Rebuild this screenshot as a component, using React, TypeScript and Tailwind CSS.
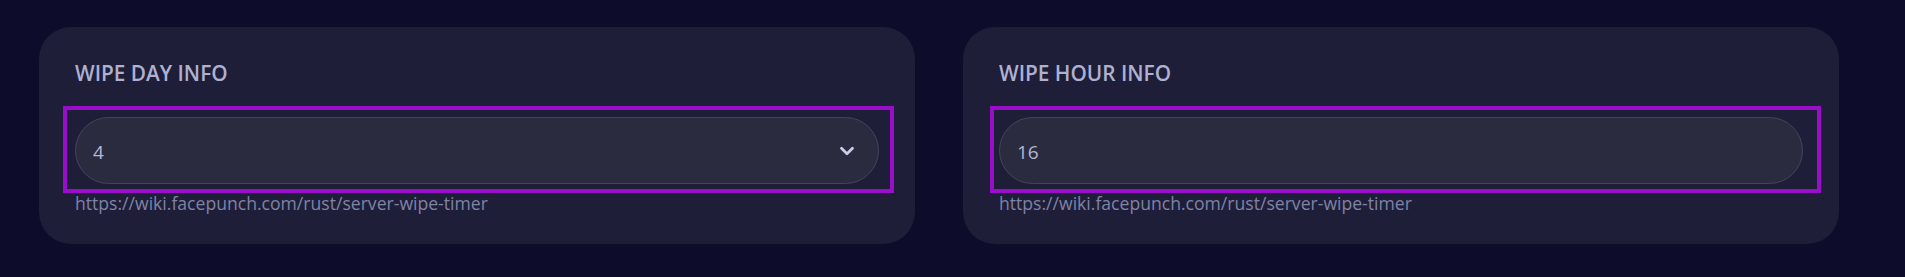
import { ChevronDown } from "lucide-react";

const WIKI = "https://wiki.facepunch.com/rust/server-wipe-timer";

type FieldCardProps = {
  title: string;
  value: string;
  select?: boolean;
  boxClass: string;
};

function FieldCard({ title, value, select, boxClass }: FieldCardProps) {
  return (
    <div className="w-[876px] rounded-[32px] bg-[#1e1e39] px-9 pt-[32px] pb-[31px]">
      <h3 className="text-[20.8px] leading-[28px] font-semibold text-[#aeb1d1]">
        {title}
      </h3>
      {/* highlighted field wrapper */}
      <div className={`mt-[19px] border-4 border-[#9a0dca] pt-[7px] pb-[5px] ${boxClass}`}>
        <div className="flex h-[67px] items-center justify-between rounded-full border border-[#43445c] bg-[#2b2b40] pl-[17px] pr-5">
          <span className="pt-1 text-[19px] text-[#b4b6d0]">{value}</span>
          {select && <ChevronDown size={22} strokeWidth={3} className="text-[#c9cde8]" />}
        </div>
      </div>
      <p className="text-[17.6px] leading-[20px] text-[#7f83a6]">{WIKI}</p>
    </div>
  );
}

export default function App() {
  return (
    <div
      className="h-[277px] w-full bg-[#0d0d2b]"
      style={{ fontFamily: '"Open Sans", "Noto Sans", sans-serif' }}
    >
      <div className="flex gap-12 pl-[39px] pt-[27px]">
        <FieldCard
          title="WIPE DAY INFO"
          value="4"
          select
          boxClass="-ml-[12px] -mr-[15px] pl-2 pr-[11px]"
        />
        <FieldCard
          title="WIPE HOUR INFO"
          value="16"
          boxClass="-ml-[9px] -mr-[18px] pl-[5px] pr-[14px]"
        />
      </div>
    </div>
  );
}
